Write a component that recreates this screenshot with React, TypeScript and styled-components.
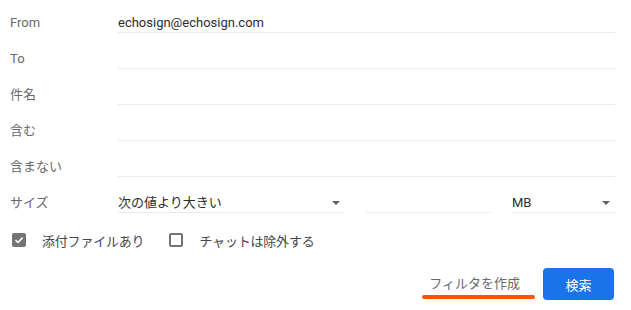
import React from "react";
import styled, { createGlobalStyle } from "styled-components";

const GlobalStyle = createGlobalStyle`
  body {
    margin: 0;
    background: #ffffff;
    font-family: Roboto, "Noto Sans CJK JP", "Noto Sans", sans-serif;
    font-size: 13px;
  }
`;

const Container = styled.div`
  width: 631px;
  height: 310px;
  box-sizing: border-box;
  padding: 0 16px 0 10px;
  display: flex;
  flex-direction: column;
  gap: 3px;
`;
const Row = styled.div`
  display: grid;
  grid-template-columns: 108px 1fr;
  height: 33px;
  align-items: stretch;
`;
const Label = styled.span`
  color: #666a6e;
  line-height: 16px;
  padding-top: 15px;
`;
const Field = styled.div`
  box-sizing: border-box;
  border-bottom: 1px solid #e8eaed;
  color: #2b2d30;
  line-height: 16px;
  padding-top: 15px;
  white-space: nowrap;
  overflow: hidden;
`;
const SizeFields = styled.div`
  display: grid;
  grid-template-columns: 227px 125px 1fr;
  column-gap: 21px;
`;
const Select = styled(Field)`
  display: flex;
  justify-content: space-between;
  align-items: flex-start;
  padding-right: 5px;
`;
const Caret = styled.span`
  margin-top: 6px;
  width: 0;
  height: 0;
  border-left: 4px solid transparent;
  border-right: 4px solid transparent;
  border-top: 4px solid #5f6368;
`;
const CheckRow = styled.div`
  display: flex;
  align-items: center;
  height: 24px;
  margin-top: 12px;
  padding-left: 2px;
`;
const CheckItem = styled.label`
  display: flex;
  align-items: center;
  gap: 16px;
  margin-right: 25px;
  color: #444649;
  letter-spacing: -0.2px;
`;
const Box = styled.span<{ $checked?: boolean }>`
  box-sizing: border-box;
  width: 14px;
  height: 14px;
  border-radius: 2px;
  border: 2px solid #757575;
  background: ${p => (p.$checked ? "#757575" : "transparent")};
  display: flex;
  align-items: center;
  justify-content: center;
`;
const Actions = styled.div`
  display: flex;
  justify-content: flex-end;
  align-items: center;
  gap: 23px;
  margin-top: 13px;
`;
const FilterLink = styled.span`
  position: relative;
  height: 32px;
  line-height: 32px;
  color: #666a6e;
`;
const Highlight = styled.span`
  position: absolute;
  left: -7px;
  right: -15px;
  bottom: 1px;
  height: 4px;
  border-radius: 2px;
  background: #ff5500;
`;
const SearchBtn = styled.button`
  width: 71px;
  height: 32px;
  border: none;
  border-radius: 4px;
  background: #1a73e8;
  color: #ffffff;
  font-family: inherit;
  font-size: 13px;
  margin-right: 1px;
`;

const rows = [
  { label: "From", value: "echosign@echosign.com" },
  { label: "To", value: "" },
  { label: "件名", value: "" },
  { label: "含む", value: "" },
  { label: "含まない", value: "" },
];

const App = () => {
  return (
    <Container>
      <GlobalStyle />
      {rows.map(r => (
        <Row key={r.label}>
          <Label>{r.label}</Label>
          <Field>{r.value}</Field>
        </Row>
      ))}
      <Row>
        <Label>サイズ</Label>
        <SizeFields>
          <Select>
            次の値より大きい
            <Caret />
          </Select>
          <Field />
          <Select>
            MB
            <Caret />
          </Select>
        </SizeFields>
      </Row>
      <CheckRow>
        <CheckItem>
          <Box $checked>
            <svg width="10" height="10" viewBox="0 0 10 10">
              <path d="M1.5 5.2 L4 7.5 L8.6 2.6" fill="none" stroke="#fff" strokeWidth="1.6" />
            </svg>
          </Box>
          添付ファイルあり
        </CheckItem>
        <CheckItem>
          <Box />
          チャットは除外する
        </CheckItem>
      </CheckRow>
      <Actions>
        <FilterLink>
          フィルタを作成
          <Highlight />
        </FilterLink>
        <SearchBtn>検索</SearchBtn>
      </Actions>
    </Container>
  );
};
export default App;
